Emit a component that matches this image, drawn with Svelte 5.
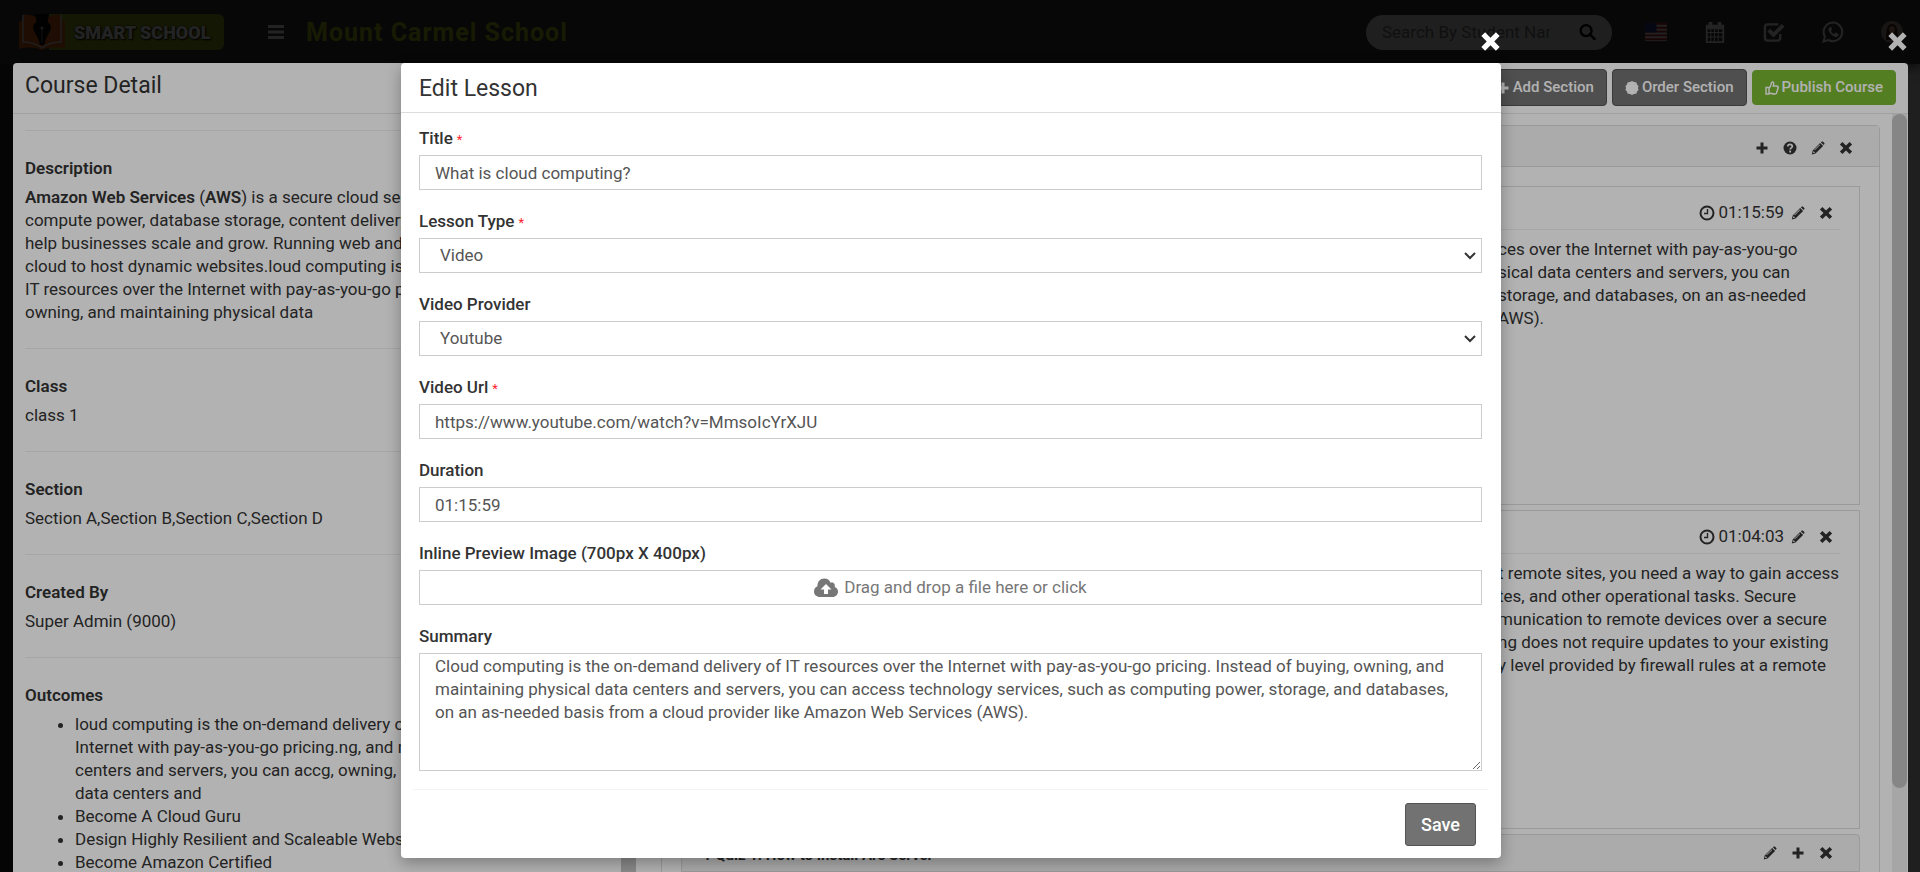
<script>
  let title = "What is cloud computing?";
  let lessonType = "Video";
  let provider = "Youtube";
  let videoUrl = "https://www.youtube.com/watch?v=MmsoIcYrXJU";
  let duration = "01:15:59";
  let summary =
    "Cloud computing is the on-demand delivery of IT resources over the Internet with pay-as-you-go pricing. Instead of buying, owning, and maintaining physical data centers and servers, you can access technology services, such as computing power, storage, and databases, on an as-needed basis from a cloud provider like Amazon Web Services (AWS).";

  const details = [
    { name: "Class", value: "class 1" },
    { name: "Section", value: "Section A,Section B,Section C,Section D" },
    { name: "Created By", value: "Super Admin (9000)" },
  ];

  const outcomes = [
    "loud computing is the on-demand delivery of IT resources over the Internet with pay-as-you-go pricing.ng, and maintaining physical data centers and servers, you can accg, owning, and maintaining physical data centers and",
    "Become A Cloud Guru",
    "Design Highly Resilient and Scaleable Websites",
    "Become Amazon Certified",
  ];

  const lessons = [
    {
      duration: "01:15:59",
      lines: [
        "ces over the Internet with pay-as-you-go",
        "sical data centers and servers, you can",
        "storage, and databases, on an as-needed",
        "AWS).",
      ],
    },
    {
      duration: "01:04:03",
      lines: [
        "t remote sites, you need a way to gain access",
        "tes, and other operational tasks. Secure",
        "munication to remote devices over a secure",
        "ng does not require updates to your existing",
        "y level provided by firewall rules at a remote",
      ],
    },
  ];
</script>

{#snippet plus()}
  <svg class="icon" viewBox="0 0 14 14"><path d="M5.5 1.5h3v4h4v3h-4v4h-3v-4h-4v-3h4z" /></svg>
{/snippet}

{#snippet pencil()}
  <svg class="icon" viewBox="0 0 14 14">
    <path fill-rule="evenodd" d="M9.8 1.2 11 .5c.4-.2.8-.1 1.1.2l1.2 1.2c.3.3.4.8.1 1.1l-.9 1.1zM9.1 1.9l3 3-7.6 7.6L.8 13.4l.9-3.8zM2.5 10.1l-.4 1.6.4.4 1.6-.4zM8.6 3.5 3.3 8.8l.5.5 5.3-5.3z" />
  </svg>
{/snippet}

{#snippet remove()}
  <svg class="icon" viewBox="0 0 14 14"><path d="M3.4.9 7 4.5 10.6.9 13.1 3.4 9.5 7l3.6 3.6-2.5 2.5L7 9.5l-3.6 3.6L.9 10.6 4.5 7 .9 3.4z" /></svg>
{/snippet}

<div class="page">
  <header class="topbar">
    <div class="logo">
      <svg class="book" viewBox="0 0 46 36">
        <path fill="#d9601a" d="M0 8l4-2v23c8-1 14 1 19 5 5-4 11-6 19-5V6l4 2v27c-8-2-15-2-23 1-8-3-15-3-23-1z" />
        <path fill="#e0661c" d="M4 1c8-1 14 2 19 6 5-4 11-7 19-6v27c-8 0-14 2-19 6-5-4-11-6-19-6z" />
        <path fill="none" stroke="#ddd" stroke-width="1.500" d="M4 1v27c8 0 14 2 19 6 5-4 11-6 19-6V1" />
        <path fill="#0a0a0a" d="M16 0h14l-1 6c-2 3 3 3 3 7 0 5-5 8-7 18h-4c-2-10-7-13-7-18 0-4 5-4 3-7z" />
        <path stroke="#777" d="M23 15v14" />
        <circle cx="23" cy="14" r="1.500" fill="#bbb" />
      </svg>
      <span>SMART SCHOOL</span>
    </div>
    <button class="menu" aria-label="Toggle navigation">
      <svg viewBox="0 0 16 14"><path d="M0 0h16v3H0zm0 5.500h16v3H0zM0 11h16v3H0z" /></svg>
    </button>
    <div class="school">Mount Carmel School</div>
    <form class="search">
      <input type="text" placeholder="Search By Student Name" aria-label="Search By Student Name" />
      <button type="button" aria-label="Search">
        <svg viewBox="0 0 18 18" fill="none" stroke="#000" stroke-width="2.500">
          <circle cx="7.500" cy="7.500" r="5.800" /><path d="m12 12 4.500 4.500" stroke-linecap="round" />
        </svg>
      </button>
    </form>
    <nav class="tools">
      <a href="#language" aria-label="Language">
        <svg viewBox="0 0 23 19">
          <path fill="#eee" d="M0 0h23v19H0z" />
          <path stroke="#b22234" stroke-width="2" d="M0 1h23M0 5h23M0 9h23M0 13h23M0 17h23" />
          <path fill="#2b3a80" d="M0 0h12v10H0z" />
        </svg>
      </a>
      <a href="#calendar" aria-label="Calendar">
        <svg viewBox="0 0 22 24">
          <path fill-rule="evenodd" d="M1 4h3V1h4v3h6V1h4v3h3v20H1zM3 9v3h3V9zm4 0v3h3V9zm4 0v3h3V9zm4 0v3h4V9zM3 13v4h3v-4zm4 0v4h3v-4zm4 0v4h3v-4zm4 0v4h4v-4zM3 18v4h3v-4zm4 0v4h3v-4zm4 0v4h3v-4zm4 0v4h4v-4z" />
        </svg>
      </a>
      <a href="#tasks" aria-label="Tasks">
        <svg viewBox="0 0 23 22" fill="none" stroke="currentColor">
          <path stroke-width="2.500" d="M18 13v4q0 3-3 3H5q-3 0-3-3V6q0-3 3-3h11" /><path stroke-width="4" d="m6 9 5 5L21 4" />
        </svg>
      </a>
      <a href="#chat" aria-label="Chat">
        <svg viewBox="0 0 22 22">
          <path fill="none" stroke="currentColor" stroke-width="2" d="m1.500 20.500 1.400-5A9.300 9.300 0 1 1 6.500 19z" />
          <path d="M8 6 6.500 7.500c-1 3 4.500 9 8 8.500l2-1.500v-1.500l-3-1.500-1.500 1.500c-1.500-.5-2.500-1.500-3-3l1-1.200L9.200 6z" />
        </svg>
      </a>
      <a href="#profile" aria-label="Profile">
        <svg viewBox="0 0 22 22">
          <circle cx="11" cy="11" r="11" fill="#ad9b92" /><path fill="#3b2018" d="M5 19C5 6 7 3 11 3s6 3 6 16z" /><path fill="#c98d70" d="M8 8c0-4 6-4 6 0 0 6-6 6-6 0z" />
        </svg>
      </a>
    </nav>
  </header>

  <div class="backdrop page-shade"></div>

  <section class="course">
    <button class="close" aria-label="Close course">{@render remove()}</button>
    <header class="course-head">
      <h4>Course Detail</h4>
      <div class="actions">
        <button class="btn">{@render plus()} Add Section</button>
        <button class="btn">
          <svg class="icon" viewBox="0 0 14 14"><path d="m7 0 2 1 2.500.5.500 2L13.500 5 13 7l.5 2-1.500 1.500-.5 2L9 13l-2 1-2-1-2.500-.5-.5-2L.5 9 1 7 .5 5 2 3.500l.5-2L5 1z" /></svg>
          Order Section
        </button>
        <button class="btn publish">
          <svg class="icon" viewBox="0 0 14 14" stroke="currentColor" stroke-width="1.400">
            <path d="M1 6.500h3V13H1zM4 7c2-1 2-3 2.500-5.500C6.700.7 9 .5 8.700 3L8.200 5H12c1.600 0 1.300 1.700.7 2 .5.700.3 1.500-.4 2 .3.800 0 1.400-.6 1.900.1 1.500-.7 2.100-2 2.100-2 0-3-.5-5.700-1" />
          </svg>
          Publish Course
        </button>
      </div>
    </header>

    <div class="course-body">
      <aside class="info">
        <hr />
        <h5>Description</h5>
        <p>
          <b>Amazon Web Services</b> (<b>AWS</b>) is a secure cloud services platform, offering<br />
          compute power, database storage, content delivery and other functionality to<br />
          help businesses scale and grow. Running web and application servers in the<br />
          cloud to host dynamic websites.loud computing is the on-demand delivery of<br />
          IT resources over the Internet with pay-as-you-go pricing. Instead of buying,<br />
          owning, and maintaining physical data
        </p>
        {#each details as item}
          <hr />
          <h5>{item.name}</h5>
          <p>{item.value}</p>
        {/each}
        <hr />
        <h5>Outcomes</h5>
        <ul>
          {#each outcomes as outcome}
            <li>{outcome}</li>
          {/each}
        </ul>
      </aside>
      <div class="track"></div>

      <div class="content">
        <div class="section-card">
          <div class="bar">
            <button aria-label="Add lesson">{@render plus()}</button>
            <button aria-label="Add quiz">
              <svg class="icon" viewBox="0 0 14 14">
                <circle cx="7" cy="7" r="6.500" />
                <path fill="none" stroke="#f4f4f4" stroke-width="1.800" d="M4.700 5.500c.2-3 4.800-2.600 4.600 0C9.200 7 7.200 6.800 7.200 8.500M7.200 9.500v2" />
              </svg>
            </button>
            <button aria-label="Edit section">{@render pencil()}</button>
            <button aria-label="Delete section">{@render remove()}</button>
          </div>
          <div class="lessons">
            {#each lessons as lesson}
              <article>
                <div class="lesson-head">
                  <svg class="clock" viewBox="0 0 16 16" fill="none" stroke="currentColor">
                    <circle cx="8" cy="8" r="6.500" stroke-width="2" /><path stroke-width="1.400" d="M8.500 4v4.500H5" />
                  </svg>
                  <span>{lesson.duration}</span>
                  <button aria-label="Edit lesson">{@render pencil()}</button>
                  <button aria-label="Delete lesson">{@render remove()}</button>
                </div>
                <p>
                  {#each lesson.lines as line}
                    <span>{line}</span>
                  {/each}
                </p>
              </article>
            {/each}
            <div class="quiz">
              <b>? Quiz 1: How to Install Arc Server</b>
              <button aria-label="Edit quiz">{@render pencil()}</button>
              <button aria-label="Add question">{@render plus()}</button>
              <button aria-label="Delete quiz">{@render remove()}</button>
            </div>
          </div>
        </div>
      </div>
      <div class="track main-track"><div class="thumb"></div></div>
    </div>
  </section>

  <div class="backdrop"></div>

  <div class="dialog" role="dialog" aria-labelledby="dialog-title">
    <button class="close" aria-label="Close">{@render remove()}</button>
    <header><h4 id="dialog-title">Edit Lesson</h4></header>
    <form>
      <div class="field">
        <label for="title">Title<small>*</small></label>
        <input id="title" type="text" bind:value={title} />
      </div>
      <div class="field">
        <label for="type">Lesson Type<small>*</small></label>
        <select id="type" bind:value={lessonType}>
          <option>Video</option>
          <option>Pdf</option>
          <option>Text</option>
        </select>
      </div>
      <div class="field">
        <label for="provider">Video Provider</label>
        <select id="provider" bind:value={provider}>
          <option>Youtube</option>
          <option>Html5</option>
        </select>
      </div>
      <div class="field">
        <label for="url">Video Url<small>*</small></label>
        <input id="url" type="text" bind:value={videoUrl} />
      </div>
      <div class="field">
        <label for="duration">Duration</label>
        <input id="duration" type="text" bind:value={duration} />
      </div>
      <div class="field">
        <label for="image">Inline Preview Image (700px X 400px)</label>
        <div class="drop">
          <svg viewBox="0 0 24 20">
            <path fill-rule="evenodd" d="M6 19C2.500 19 0 16.700 0 13.500c0-2.400 1.300-4.300 3.500-5.200C3.200 3.800 6.200.5 10.300.5c3 0 5.300 1.600 6.300 4.200 2.700-.9 5 1.500 4.100 4.200 2 .6 3.300 2.300 3.300 4.600 0 3.100-2.300 5.500-5.500 5.500zM12 6l-5.500 5.500H10V16h4v-4.500h3.500z" />
          </svg>
          <span>Drag and drop a file here or click</span>
          <input id="image" type="file" />
        </div>
      </div>
      <div class="field">
        <label for="summary">Summary</label>
        <textarea id="summary" bind:value={summary}></textarea>
      </div>
      <footer><button class="save" type="button">Save</button></footer>
    </form>
  </div>
</div>

<style>
  :global(body) {
    margin: 0;
    background: #dedede;
    color: #333;
    font-family: Roboto, "Liberation Sans", sans-serif;
    font-size: 17px;
    line-height: 23px;
  }

  * {
    box-sizing: border-box;
  }

  button,
  input,
  select,
  textarea {
    font: inherit;
    color: inherit;
  }

  button {
    border: 0;
    padding: 0;
    background: none;
    cursor: pointer;
  }

  h4,
  h5,
  p {
    margin: 0;
  }

  .page {
    position: relative;
    height: 100vh;
    overflow: hidden;
  }

  .icon {
    width: 14px;
    height: 14px;
    fill: currentColor;
    display: block;
  }

  .topbar {
    display: flex;
    align-items: center;
    height: 64px;
    padding: 0 17px 0 19px;
    background: #3a3a3a;
    box-shadow: 0 4px 10px #555;
    color: #fff;
  }

  .logo {
    display: flex;
    align-items: center;
    width: 205px;
    height: 36px;
    border-radius: 6px;
    background: linear-gradient(90deg, transparent 30px, #98ab1c 30px);
  }

  .book {
    width: 46px;
    height: 36px;
    flex: none;
  }

  .logo span {
    margin-left: 9px;
    font-size: 18px;
    font-weight: 900;
    color: #fff;
    text-shadow: 0 0 2px #000, 1px 1px 2px #000;
    white-space: nowrap;
  }

  .menu {
    margin-left: 44px;
  }

  .menu svg {
    display: block;
    width: 16px;
    height: 14px;
    fill: #fff;
  }

  .school {
    margin-left: 22px;
    color: #b0c01a;
    font-size: 25px;
    font-weight: 700;
    white-space: nowrap;
    letter-spacing: 1px;
  }

  .search {
    display: flex;
    align-items: center;
    justify-content: space-between;
    width: 246px;
    height: 35px;
    margin-left: auto;
    padding: 0 16px;
    border-radius: 20px;
    background: #dedede;
  }

  .search input {
    width: 168px;
    padding: 0;
    border: 0;
    background: none;
    outline: 0;
  }

  .search input::placeholder {
    color: #777;
    opacity: 1;
  }

  .search svg {
    display: block;
    width: 17px;
    height: 18px;
  }

  .tools {
    display: flex;
    align-items: center;
    gap: 37px;
    margin-left: 33px;
  }

  .tools a {
    color: #fff;
  }

  .tools svg {
    display: block;
    width: 22px;
    height: 22px;
    fill: currentColor;
  }

  .tools a:nth-child(3) svg,
  .tools a:first-child svg {
    fill: none;
  }

  .backdrop {
    position: absolute;
    inset: 0;
    background: rgba(0, 0, 0, 0.3);
  }

  .page-shade {
    background: rgba(0, 0, 0, 0.8);
  }

  /* the collapsed side menu stays darker than the page */
  .page-shade::before {
    content: "";
    position: absolute;
    inset: 64px auto 0 0;
    width: 13px;
    background: #080808;
  }

  .course {
    position: absolute;
    inset: 63px 12px 0 13px;
    display: flex;
    flex-direction: column;
    background: #fff;
    border-radius: 4px 4px 0 0;
  }

  .close {
    position: absolute;
    top: -32px;
    right: 0;
    color: #fff;
  }

  .close .icon {
    width: 21px;
    height: 21px;
  }

  .course-head {
    display: flex;
    justify-content: space-between;
    height: 51px;
    padding: 6px 12px 0;
    border-bottom: 1px solid #e5e5e5;
  }

  h4 {
    font-size: 23px;
    font-weight: 400;
    line-height: 34px;
  }

  .actions {
    display: flex;
    gap: 5px;
  }

  .btn {
    display: flex;
    align-items: center;
    gap: 3px;
    height: 37px;
    padding: 0 12px;
    border: 1px solid #545454;
    border-radius: 4px;
    background: #727272;
    color: #fff;
    font-size: 15px;
    font-weight: 500;
    white-space: nowrap;
  }

  .publish {
    height: 35px;
    margin-top: 1px;
    border-color: #78b530;
    background: #78b530;
  }

  .publish .icon {
    fill: none;
  }

  .course-body {
    flex: 1;
    display: flex;
    min-height: 0;
    overflow: hidden;
  }

  .info {
    flex: 0 0 608px;
    padding: 16px 16px 0 12px;
  }

  hr {
    height: 1px;
    margin: 24px 0 22px;
    border: 0;
    background: #eee;
  }

  .info hr:first-child {
    margin-top: 0;
  }

  h5 {
    padding: 3px 0 6px;
    font-size: 17px;
    font-weight: 700;
    line-height: 24px;
  }

  .info b,
  h5 {
    font-weight: 600;
  }

  .info p {
    white-space: nowrap;
  }

  ul {
    margin: 0;
    padding-left: 50px;
  }

  .track {
    flex: 0 0 15px;
    background: #c4c4c4;
  }

  .content {
    flex: 1;
    min-width: 0;
    padding: 11px 12px 0 25px;
  }

  .section-card {
    border: 1px solid #ddd;
    border-radius: 4px;
  }

  .bar {
    display: flex;
    align-items: center;
    justify-content: flex-end;
    gap: 14px;
    height: 41px;
    padding: 4px 26px 0 0;
    border-bottom: 1px solid #ddd;
    background: #f5f5f5;
  }

  .lessons {
    padding: 19px;
  }

  article {
    height: 319px;
    margin-bottom: 5px;
    padding: 13px 19px;
    border: 1px solid #ddd;
  }

  .lesson-head {
    display: flex;
    align-items: center;
    justify-content: flex-end;
    height: 30px;
    padding: 0 7px 4px 0;
    border-bottom: 1px solid #eee;
  }

  .clock {
    width: 16px;
    height: 16px;
    margin-right: 3px;
  }

  .lesson-head button {
    margin-left: 7px;
  }

  .lesson-head button + button {
    margin-left: 14px;
  }

  article p {
    width: 342px;
    margin: 8px 0 0 auto;
    white-space: nowrap;
  }

  article p span {
    display: block;
  }

  .quiz {
    display: flex;
    align-items: center;
    gap: 14px;
    height: 38px;
    padding: 0 26px 0 22px;
    border: 1px solid #ddd;
    border-radius: 4px 4px 0 0;
    background: #f5f5f5;
  }

  .quiz b {
    flex: 1;
    padding-top: 4px;
    font-size: 15px;
  }

  .main-track {
    margin-right: 1px;
    background: #eee;
  }

  .thumb {
    height: 674px;
    border-radius: 8px;
    background: #c1c1c1;
  }

  .dialog {
    position: absolute;
    top: 63px;
    left: 50%;
    width: 1100px;
    max-width: 100%;
    transform: translateX(-559px);
    border-radius: 4px;
    background: #fff;
    box-shadow: 0 5px 15px rgba(0, 0, 0, 0.3);
  }

  .dialog header {
    padding: 9px 18px 6px;
    border-bottom: 1px solid #ddd;
  }

  .dialog form {
    padding: 14px 19px 12px 18px;
  }

  .field {
    margin-bottom: 20px;
  }

  .field:nth-last-child(2) {
    margin-bottom: 18px;
  }

  label {
    display: block;
    height: 24px;
    margin-bottom: 4px;
    font-weight: 500;
  }

  small {
    margin-left: 4px;
    color: #ff1f2f;
    font-size: 13px;
    font-weight: 400;
  }

  .field input,
  select,
  textarea,
  .drop {
    display: block;
    width: 100%;
    height: 35px;
    padding: 0 15px;
    border: 1px solid #ccc;
    border-radius: 0;
    outline: 0;
    background: #fff;
    color: #555;
  }

  select {
    padding: 0 20px;
    appearance: none;
    background: #fff url("data:image/svg+xml,%3Csvg xmlns='http://www.w3.org/2000/svg' width='12' height='8' fill='none' stroke='%23333' stroke-width='2'%3E%3Cpath d='m1 1 5 5 5-5'/%3E%3C/svg%3E") no-repeat right 5px center;
  }

  .drop {
    position: relative;
    display: flex;
    align-items: center;
    justify-content: center;
    gap: 6px;
    color: #777;
  }

  .drop svg {
    width: 24px;
    height: 20px;
    fill: #777;
  }

  .drop input {
    position: absolute;
    inset: 0;
    opacity: 0;
  }

  textarea {
    height: 118px;
    padding-top: 1px;
    resize: vertical;
  }

  footer {
    margin: 0 -6px;
    padding: 13px 12px 0;
    border-top: 1px solid #f4f4f4;
    text-align: right;
  }

  .save {
    height: 43px;
    padding: 0 15px;
    border: 1px solid #545454;
    border-radius: 3px;
    background: #727272;
    color: #fff;
    font-size: 18px;
    font-weight: 500;
  }
</style>
